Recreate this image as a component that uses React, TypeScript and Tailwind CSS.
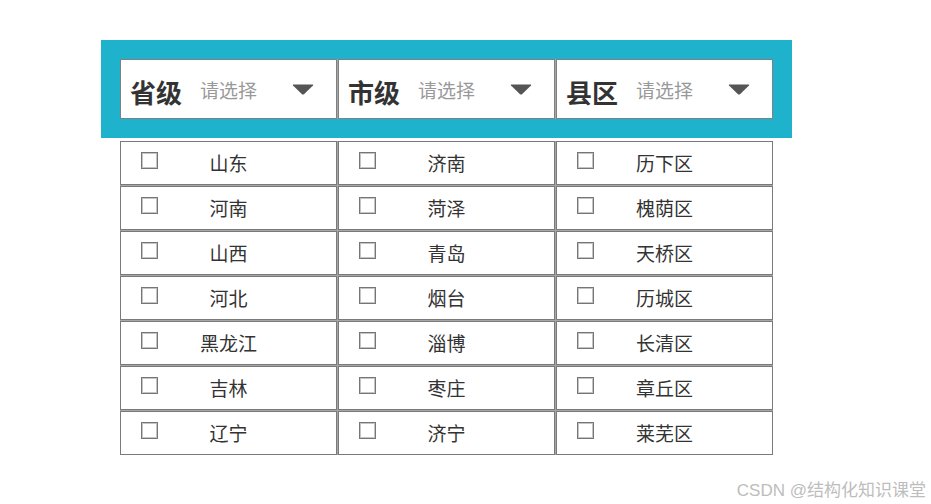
import { useState } from "react";

const columns = [
  {
    label: "省级",
    items: ["山东", "河南", "山西", "河北", "黑龙江", "吉林", "辽宁"],
  },
  {
    label: "市级",
    items: ["济南", "菏泽", "青岛", "烟台", "淄博", "枣庄", "济宁"],
  },
  {
    label: "县区",
    items: ["历下区", "槐荫区", "天桥区", "历城区", "长清区", "章丘区", "莱芜区"],
  },
];

function Caret() {
  return (
    <svg width="22" height="11" viewBox="0 0 22 11" className="shrink-0">
      <path d="M1.5 0.5 H20.5 Q21.8 0.5 21 1.6 L12 10.2 Q11 11 10 10.2 L1 1.6 Q0.2 0.5 1.5 0.5 Z" fill="#555" />
    </svg>
  );
}

export default function App() {
  const [checked, setChecked] = useState<Record<string, boolean>>({});

  const toggle = (key: string) =>
    setChecked((prev) => ({ ...prev, [key]: !prev[key] }));

  return (
    <div
      className="relative w-[931px] h-[504px] bg-white overflow-hidden"
      style={{ fontFamily: '"Noto Sans CJK SC", "Noto Sans", sans-serif' }}
    >
      <div className="pt-[40px] pl-[101px]">
        <div className="w-[691px] bg-[#1fb2cc] p-[19px]">
          <div className="grid grid-cols-3 gap-px bg-[#a6a6a6] h-[60px]">
            {columns.map((col) => (
              <div
                key={col.label}
                className="flex items-center bg-white border border-[#808080] pl-[9px] pr-[22px]"
              >
                <span className="text-[26px] leading-none font-bold text-[#333] mt-[5px]">
                  {col.label}
                </span>
                <span className="ml-[18px] text-[19px] leading-none text-[#999] mt-[1px]">
                  请选择
                </span>
                <span className="ml-auto">
                  <Caret />
                </span>
              </div>
            ))}
          </div>
        </div>

        <div className="ml-[19px] mt-[3px] w-[653px] grid grid-cols-3 gap-px bg-[#a6a6a6]">
          {columns.map((col) => (
            <div key={col.label} className="flex flex-col gap-px">
              {col.items.map((item) => {
                const key = col.label + item;
                return (
                  <label
                    key={item}
                    className="grid grid-cols-[1fr_auto_1fr] items-center h-[44px] bg-white border border-[#7a7a7a] cursor-pointer"
                  >
                    <input
                      type="checkbox"
                      checked={!!checked[key]}
                      onChange={() => toggle(key)}
                      className="appearance-none self-start mt-[10px] ml-[20px] w-[17px] h-[17px] border border-[#767676] shadow-[inset_0_0_0_1px_#c4c4c4] bg-white checked:bg-[#1fb2cc]"
                    />
                    <span className="text-[19px] leading-none text-[#333] mb-[2px]">{item}</span>
                    <span />
                  </label>
                );
              })}
            </div>
          ))}
        </div>
      </div>

      <div
        className="absolute right-[5px] bottom-[5px] text-[17px] leading-none text-[#bdbdbd]"
        style={{ fontFamily: '"Liberation Sans", "Noto Sans CJK SC", sans-serif' }}
      >
        CSDN @结构化知识课堂
      </div>
    </div>
  );
}
